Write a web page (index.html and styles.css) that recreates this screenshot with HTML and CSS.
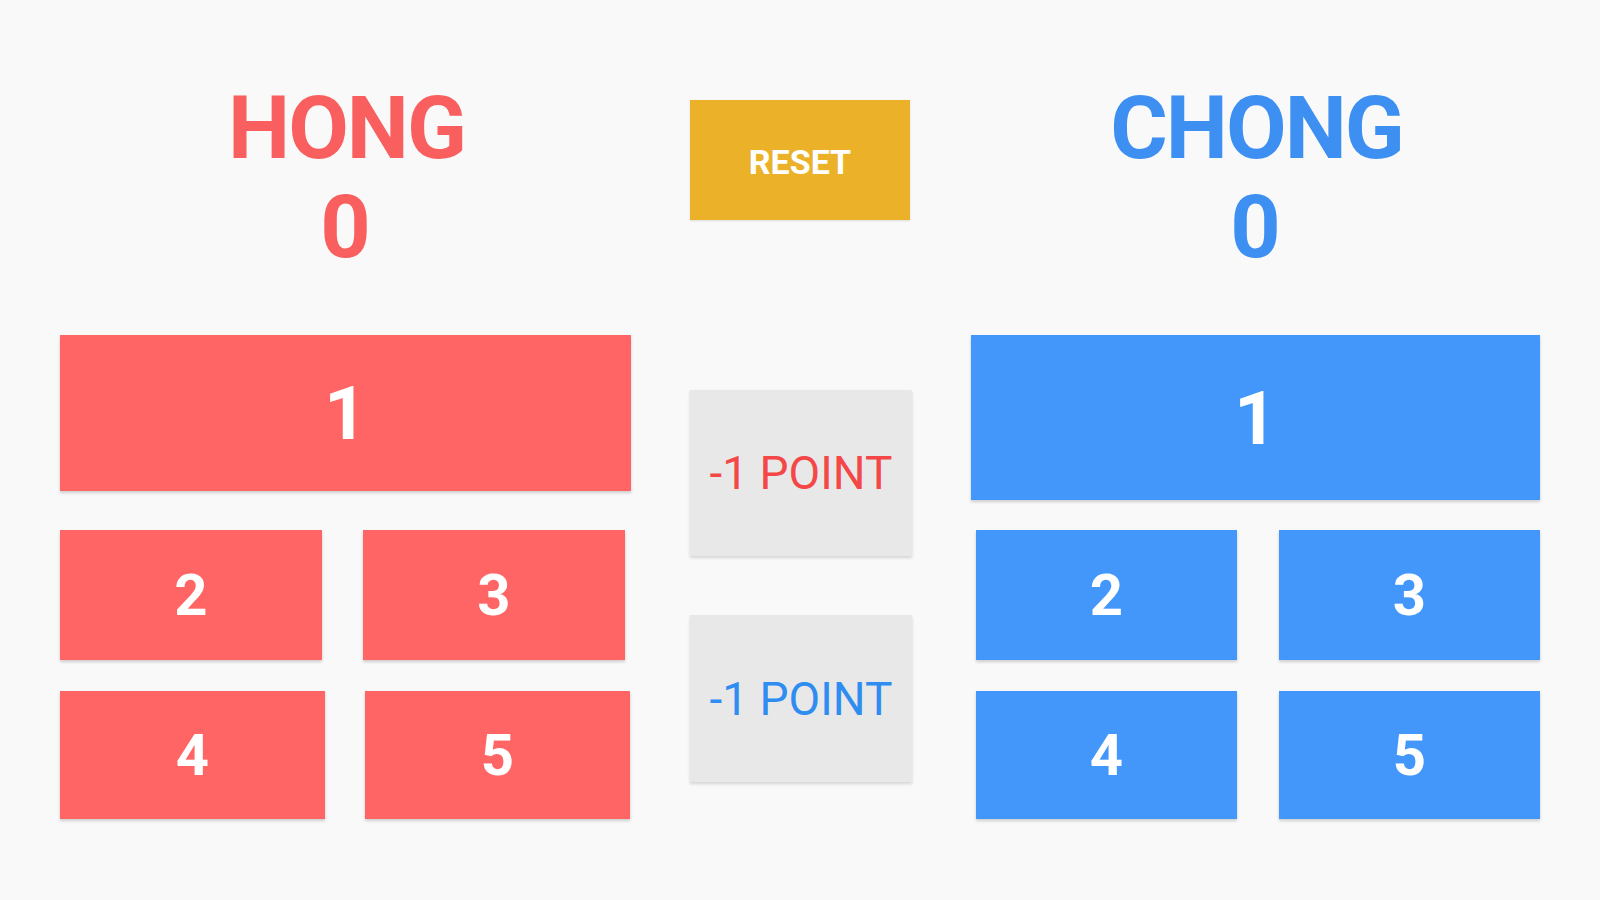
FILE: index.html
```html
<!DOCTYPE html>
<html>
<head>
<meta charset="utf-8">
<link rel="stylesheet" href="styles.css">
</head>
<body>
<div class="board">
  <div class="side side-hong">
    <div class="head head-hong">
      <div class="name">HONG</div>
      <div class="score">0</div>
    </div>
    <div class="btn big red big-hong">1</div>
    <div class="row row-hong-a">
      <div class="btn small red">2</div>
      <div class="btn small red">3</div>
    </div>
    <div class="row row-hong-b">
      <div class="btn small red">4</div>
      <div class="btn small red">5</div>
    </div>
  </div>
  <div class="middle">
    <div class="reset">RESET</div>
    <div class="minus minus-red">-1 POINT</div>
    <div class="minus minus-blue">-1 POINT</div>
  </div>
  <div class="side side-chong">
    <div class="head head-chong">
      <div class="name">CHONG</div>
      <div class="score">0</div>
    </div>
    <div class="btn big blue big-chong">1</div>
    <div class="row row-chong-a">
      <div class="btn small blue">2</div>
      <div class="btn small blue">3</div>
    </div>
    <div class="row row-chong-b">
      <div class="btn small blue">4</div>
      <div class="btn small blue">5</div>
    </div>
  </div>
</div>
</body>
</html>
```

FILE: styles.css
```css
html, body {
  margin: 0;
  padding: 0;
}
body {
  width: 1600px;
  height: 900px;
  background: #f9f9f9;
  font-family: Roboto, "Liberation Sans", sans-serif;
  overflow: hidden;
}
.board {
  display: grid;
  grid-template-columns: 571px 222px 569px;
  column-gap: 59px;
  padding: 0 60px;
}
.side {
  display: flex;
  flex-direction: column;
  padding-top: 78px;
}
.head {
  display: flex;
  flex-direction: column;
  align-items: center;
  font-weight: 700;
  font-size: 88px;
  line-height: 99px;
  height: 198px;
}
.name {
  letter-spacing: -2px;
  padding-left: 2px;
}
.head-hong { color: #f95f5f; }
.head-chong { color: #3d8ff2; }

.btn {
  display: flex;
  align-items: center;
  justify-content: center;
  color: #ffffff;
  font-weight: 700;
  box-shadow: 0 2px 3px rgba(0, 0, 0, 0.18);
}
.red { background: #ff6565; }
.blue { background: #4397fa; }

.big {
  margin-top: 59px;
  font-size: 75px;
}
.big-hong { height: 156px; width: 571px; }
.big-chong { height: 165px; width: 569px; }

.small {
  font-size: 58px;
}
.row {
  display: flex;
}
.row-hong-a {
  margin-top: 39px;
  gap: 41px;
}
.row-hong-a .small { width: 262px; height: 130px; }
.row-hong-b {
  margin-top: 31px;
  gap: 40px;
}
.row-hong-b .small { width: 265px; height: 128px; }
.row-chong-a {
  margin-top: 30px;
  padding-left: 5px;
  gap: 42px;
}
.row-chong-a .small { width: 261px; height: 130px; }
.row-chong-b {
  margin-top: 31px;
  padding-left: 5px;
  gap: 42px;
}
.row-chong-b .small { width: 261px; height: 128px; }

.middle {
  display: flex;
  flex-direction: column;
  padding-top: 100px;
}
.reset {
  width: 220px;
  height: 120px;
  background: #ebb229;
  color: #ffffff;
  font-weight: 700;
  font-size: 34px;
  display: flex;
  align-items: center;
  justify-content: center;
  padding-top: 3px;
  box-sizing: border-box;
  box-shadow: 0 1px 2px rgba(0, 0, 0, 0.12);
}
.minus {
  width: 222px;
  background: #e8e8e8;
  font-size: 46px;
  display: flex;
  align-items: center;
  justify-content: center;
  box-shadow: 0 2px 3px rgba(0, 0, 0, 0.15);
}
.minus-red {
  margin-top: 170px;
  height: 166px;
  color: #f44848;
}
.minus-blue {
  margin-top: 59px;
  height: 167px;
  color: #2f8cf0;
}
```
